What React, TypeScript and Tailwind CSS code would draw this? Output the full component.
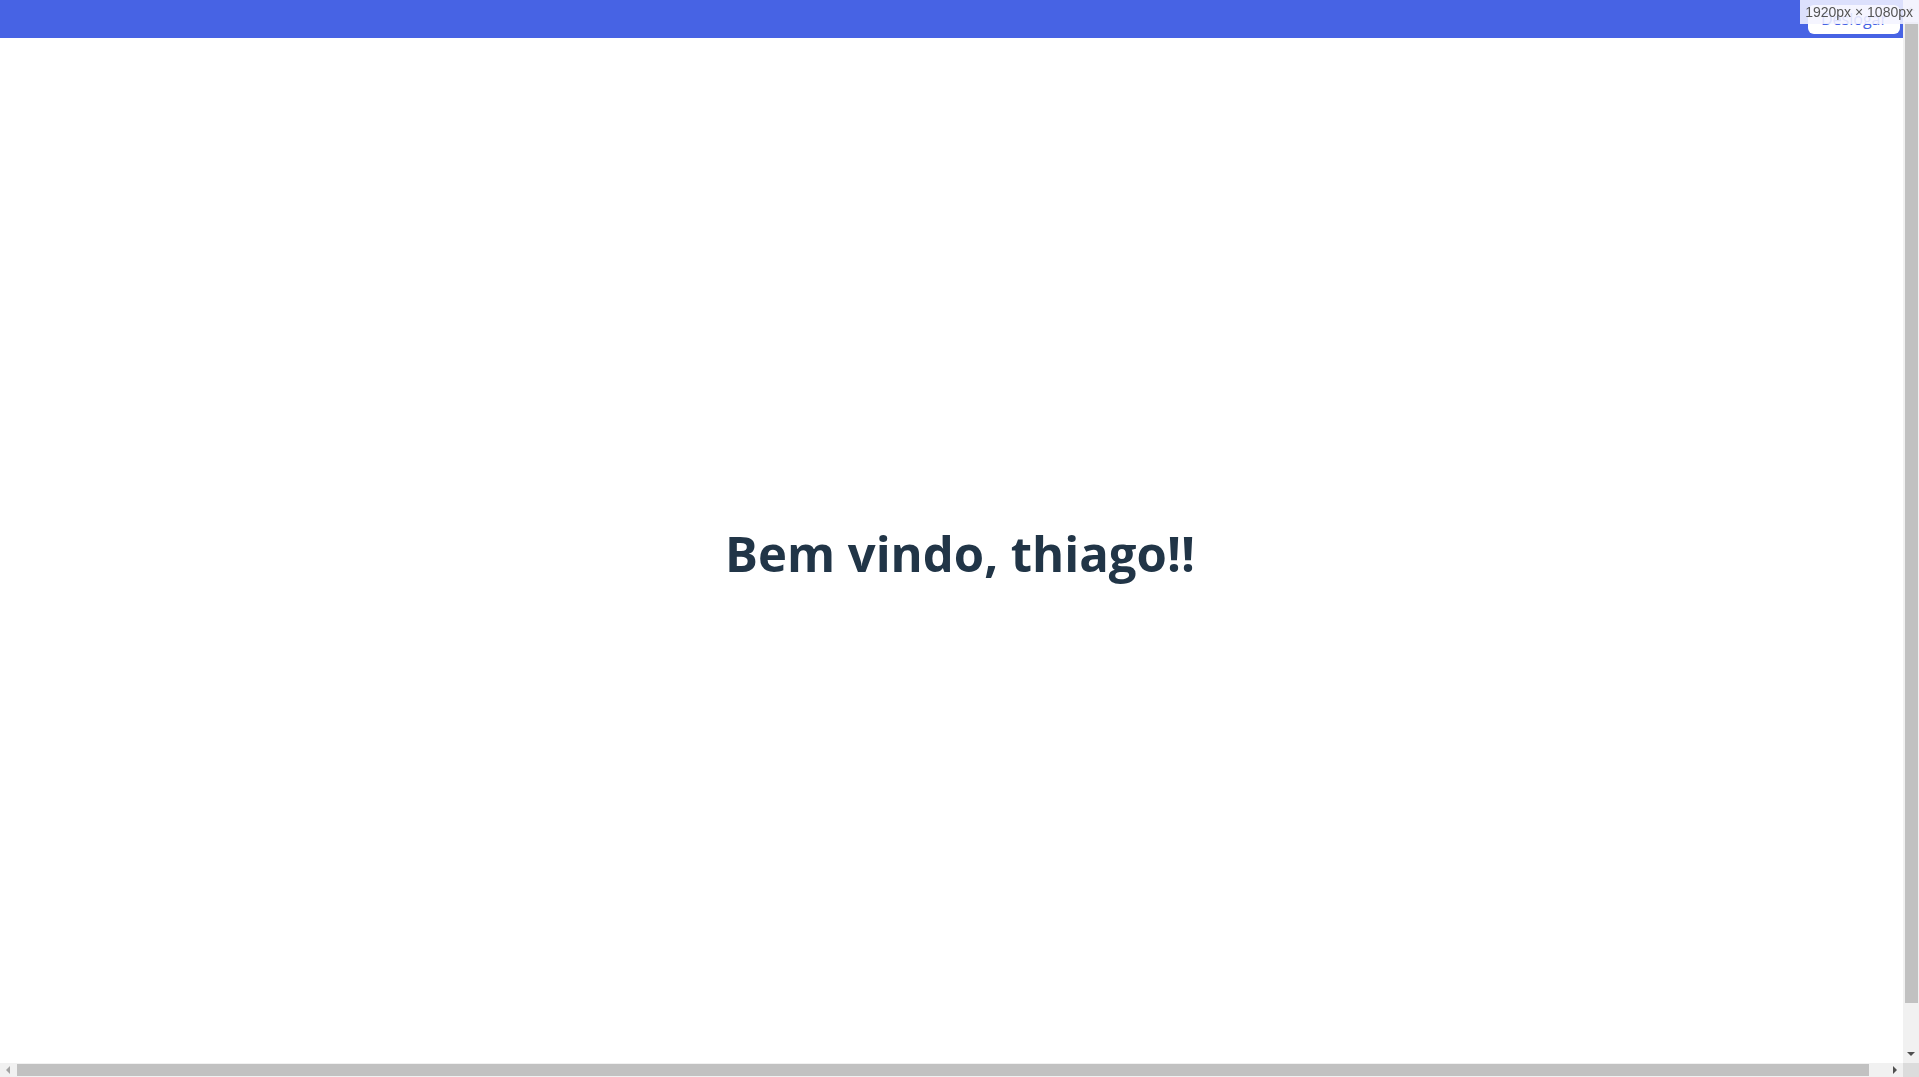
import React from 'react';

const Navbar: React.FC<{ onLogout?: () => void }> = ({ onLogout }) => {
  return (
    <nav className="h-[38px] w-full bg-[#4763e4] flex items-center justify-end pr-[20px]">
      <button
        onClick={onLogout}
        className="h-[29px] px-[13px] rounded-md bg-white text-[#4763e4] text-base leading-none"
      >
        Deslogar
      </button>
    </nav>
  );
};

// barras de rolagem do navegador (desenhadas por cima do conteúdo)
const Scrollbars: React.FC = () => (
  <>
    <div className="fixed top-0 right-0 w-[16px] h-[1063px] bg-[#f1f1f1] flex flex-col items-center">
      <svg width="16" height="17" viewBox="0 0 16 17">
        <path d="M4 11 L8 7 L12 11 Z" fill="#a3a3a3" />
      </svg>
      <div className="mt-[5px] w-[13px] h-[981px] bg-[#c1c1c1]" />
      <div className="flex-1" />
      <svg width="16" height="17" viewBox="0 0 16 17">
        <path d="M4 6 L8 10 L12 6 Z" fill="#505050" />
      </svg>
    </div>
    <div className="fixed bottom-0 left-0 w-[1903px] h-[14px] bg-[#f1f1f1] flex items-center">
      <svg width="17" height="14" viewBox="0 0 17 14">
        <path d="M10 3 L6 7 L10 11 Z" fill="#a3a3a3" />
      </svg>
      <div className="w-[1852px] h-[12px] bg-[#c1c1c1]" />
      <div className="flex-1" />
      <svg width="17" height="14" viewBox="0 0 17 14">
        <path d="M7 3 L11 7 L7 11 Z" fill="#505050" />
      </svg>
    </div>
    <div className="fixed bottom-0 right-0 w-[16px] h-[14px] bg-[#dcdcdc]" />
  </>
);

export default function App() {
  const user = 'thiago';

  return (
    <div className="relative w-[1920px] font-['Open_Sans',sans-serif]">
      <Navbar />

      <main className="h-[1079px] flex flex-col items-center pt-[491px]">
        <h1 className="text-[49px] leading-none font-bold text-[#213547]">
          Bem vindo, {user}!!
        </h1>
      </main>

      <Scrollbars />

      {/* indicador de tamanho da tela */}
      <div className="fixed top-0 right-0 h-[24px] pl-[5px] pr-[6px] flex items-center bg-[#f3f4ffdd] text-[14px] text-[#555] font-['Liberation_Sans',sans-serif]">
        1920px × 1080px
      </div>
    </div>
  );
}
